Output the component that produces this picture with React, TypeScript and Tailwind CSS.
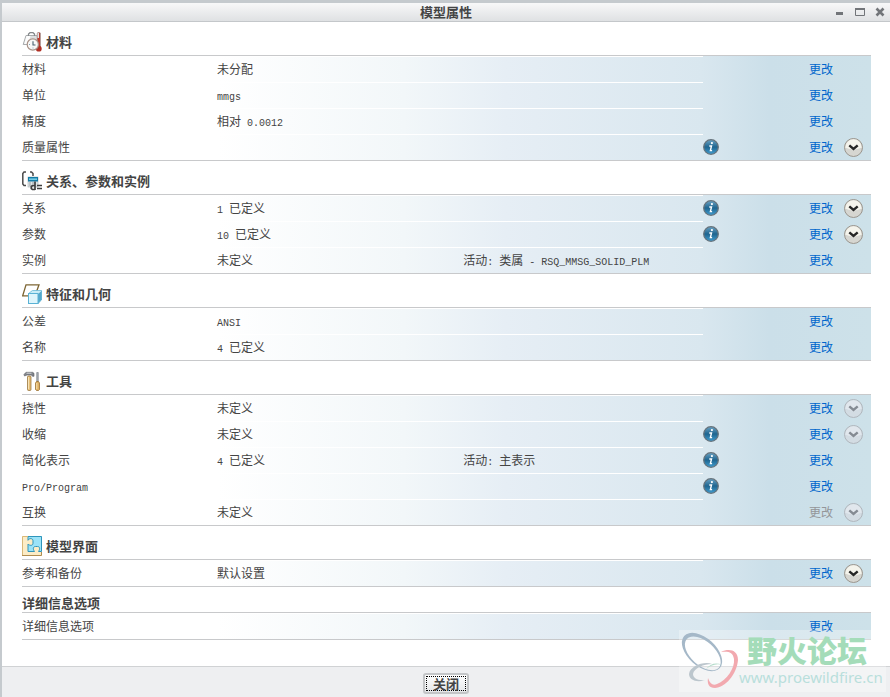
import type { ReactNode } from "react";
import { clsx } from "clsx";

type Chevron = "on" | "off";

interface Row {
  label: string;
  value?: string;
  extra?: string;
  info?: boolean;
  chevron?: Chevron;
  disabled?: boolean;
}

interface Section {
  title: string;
  icon?: ReactNode;
  rows: Row[];
}

function MaterialIcon() {
  return (
    <svg width="20" height="20" viewBox="0 0 20 20" aria-hidden="true">
      <path d="M4 3.500h11l2 9H1.200z" fill="#dcdfe0" stroke="#a9acae" />
      <path d="M4.500 4L2.200 12h4l2.300-8z" fill="#fcfcfc" />
      <path d="M6.500 4V2l1.500-1.300h3L12.500 2v2" fill="none" stroke="#85898b" strokeWidth="1.300" />
      <rect x="15.200" y=".6" width="3.200" height="15" rx="1" fill="#bd3a2c" stroke="#8f8f8f" strokeWidth=".6" />
      <rect x="15.500" y="1" width="1.500" height="5" fill="#dfe1e1" />
      <circle cx="16.800" cy="16.700" r="2.900" fill="#b02f24" />
      <circle cx="10.800" cy="12.500" r="5.600" fill="#f8f8f7" stroke="#a99389" strokeWidth="1.200" />
      <path d="M11 9.300v3.700h2.500" fill="none" stroke="#46606f" strokeWidth="1.100" />
      <path d="M7 12.500h1M10.500 16h1" stroke="#86a6bb" />
    </svg>
  );
}

function RelationIcon() {
  return (
    <svg width="20" height="20" viewBox="0 0 20 20" aria-hidden="true">
      <path d="M4 1H2L.8 2.500v10.500L2 14.500h2" fill="none" stroke="#4b4b4b" strokeWidth="1.500" />
      <path d="M8 1h1.500L11 2.500V5" fill="none" stroke="#4b4b4b" strokeWidth="1.500" />
      <rect x="6" y="6" width="10" height="10" fill="#dfe4e6" stroke="#a9afb2" strokeWidth=".6" />
      <rect x="6" y="6" width="10" height="4.500" fill="#137aa5" />
      <rect x="7" y="7.500" width="8" height="1.300" fill="#8be0f6" />
      <path d="M7 12h2M10 12h2M7 14h2" stroke="#9aa1a5" />
      <path d="M13 10.500v8.500M13 14.500h-2.500L9.300 15.500v2L10.500 18.500H13" fill="none" stroke="#3f3f3f" strokeWidth="1.700" />
      <path d="M15 14.500h5M15 17.500h5" stroke="#3f3f3f" strokeWidth="1.400" />
    </svg>
  );
}

function FeatureIcon() {
  return (
    <svg width="20" height="20" viewBox="0 0 20 20" aria-hidden="true">
      <path d="M4 .8h13l-4 11H.7z" fill="#fff" stroke="#7d6533" strokeWidth="1.300" />
      <path d="M6 10l4-3.500h10L16 10z" fill="#c8edf8" />
      <path d="M16 10l4-3.500v9L16 20z" fill="#55a9cc" />
      <rect x="6.500" y="9.500" width="9.500" height="10" fill="#def5fc" stroke="#5ab2d5" />
      <path d="M6.500 9.500l4-3h9v9l-3.500 4" fill="none" stroke="#6bbad8" strokeWidth=".8" />
    </svg>
  );
}

function ToolsIcon() {
  return (
    <svg width="20" height="20" viewBox="0 0 20 20" aria-hidden="true">
      <path d="M2 3.500L4 1.300h6.500l1.500 1v3h-1.500L9.500 4H5L2.500 5z" fill="#80848a" stroke="#5a5d63" strokeWidth=".6" />
      <path d="M4.500 2.200h5" stroke="#d5d8dc" />
      <rect x="5.500" y="5" width="3.500" height="14.500" rx="1" fill="#e6bf78" stroke="#8f6b31" strokeWidth=".7" />
      <path d="M6.500 6v12" stroke="#f8e3b5" />
      <path d="M14.700 1.500h1.600v9h-1.600z" fill="#aab0b7" stroke="#666b73" strokeWidth=".5" />
      <path d="M13.500 12l1-1.500h2l1 1.500v6.500l-1 1h-2l-1-1z" fill="#dfb164" stroke="#8f6427" strokeWidth=".7" />
      <path d="M14.800 12v6" stroke="#f8e3b5" />
    </svg>
  );
}

function InterfaceIcon() {
  return (
    <svg width="20" height="20" viewBox="0 0 20 20" aria-hidden="true">
      <rect width="20" height="20" fill="#9be3f8" />
      <path
        d="M0 0h6v4.300C7 2 11 2 11 4.800v2.400C11 10 7.500 9.800 6 8v7.500h6.500c-1.800-2.500-1.500-5 1-5h2c2.500 0 2.700 2.500 1 5H20V20H0z"
        fill="#fcecc6"
      />
      <path
        d="M6 0v4.300C7 2 11 2 11 4.800v2.400C11 10 7.500 9.800 6 8v7.500h6.500c-1.800-2.500-1.500-5 1-5h2c2.500 0 2.700 2.500 1 5h3V.5H6"
        fill="none"
        stroke="#2f95bb"
      />
      <path d="M.5 20V.5H6" fill="none" stroke="#d8b878" />
      <path d="M0 19.500h19.500V16" fill="none" stroke="#b08c50" />
    </svg>
  );
}

const sections: Section[] = [
  {
    title: "材料",
    icon: <MaterialIcon />,
    rows: [
      { label: "材料", value: "未分配" },
      { label: "单位", value: "mmgs" },
      { label: "精度", value: "相对 0.0012" },
      { label: "质量属性", info: true, chevron: "on" },
    ],
  },
  {
    title: "关系、参数和实例",
    icon: <RelationIcon />,
    rows: [
      { label: "关系", value: "1 已定义", info: true, chevron: "on" },
      { label: "参数", value: "10 已定义", info: true, chevron: "on" },
      { label: "实例", value: "未定义", extra: "活动: 类属 - RSQ_MMSG_SOLID_PLM" },
    ],
  },
  {
    title: "特征和几何",
    icon: <FeatureIcon />,
    rows: [
      { label: "公差", value: "ANSI" },
      { label: "名称", value: "4 已定义" },
    ],
  },
  {
    title: "工具",
    icon: <ToolsIcon />,
    rows: [
      { label: "挠性", value: "未定义", chevron: "off" },
      { label: "收缩", value: "未定义", info: true, chevron: "off" },
      { label: "简化表示", value: "4 已定义", extra: "活动: 主表示", info: true },
      { label: "Pro/Program", info: true },
      { label: "互换", value: "未定义", chevron: "off", disabled: true },
    ],
  },
  {
    title: "模型界面",
    icon: <InterfaceIcon />,
    rows: [{ label: "参考和备份", value: "默认设置", chevron: "on" }],
  },
  {
    title: "详细信息选项",
    rows: [{ label: "详细信息选项" }],
  },
];

// Latin runs are set in a half-width mono face, two letters per Chinese character
function Mixed({ text = "" }: { text?: string }) {
  return (
    <>
      {text.split(/([ -~]+)/).map((part, i) =>
        i % 2 ? (
          <span key={i} className="font-['Liberation_Mono',monospace] text-[10px] leading-none whitespace-pre">
            {part}
          </span>
        ) : (
          part
        )
      )}
    </>
  );
}

function InfoButton({ label }: { label: string }) {
  return (
    <button type="button" aria-label={`${label} info`} className="block size-4">
      <svg width="16" height="16" viewBox="0 0 16 16">
        <defs>
          <linearGradient id="info-fill" x1="0" y1="0" x2="0" y2="1">
            <stop offset="0" stopColor="#6ba3c4" />
            <stop offset=".5" stopColor="#1f658f" />
            <stop offset="1" stopColor="#409dd0" />
          </linearGradient>
        </defs>
        <circle cx="8" cy="8" r="7.300" fill="url(#info-fill)" stroke="#66737c" strokeWidth="1.300" />
        <circle cx="8.900" cy="4.100" r="1.100" fill="#fff" />
        <path d="M6.300 7h2.200l-1.100 4.600h1.700" fill="none" stroke="#fff" strokeWidth="1.400" />
      </svg>
    </button>
  );
}

function ChevronButton({ label, state }: { label: string; state: Chevron }) {
  const on = state === "on";
  return (
    <button type="button" aria-label={`${label} expand`} disabled={!on} className="block size-5">
      <svg width="20" height="20" viewBox="0 0 20 20">
        <circle cx="9.500" cy="10.500" r="9" fill={on ? "#d6d6d1" : "#d3dce3"} stroke={on ? "#9a958d" : "#b0b6bc"} />
        <path d="M1.300 10.500a8.200 8.200 0 0 1 16.400 0q-8.200 4-16.400 0z" fill={on ? "#f5f4ec" : "#e1e7ed"} />
        <path d="M5.300 8.300l4.200 3.700 4.200-3.700" fill="none" stroke={on ? "#262626" : "#858b93"} strokeWidth="2.400" />
      </svg>
    </button>
  );
}

function PropertySection({ title, icon, rows }: Section) {
  return (
    <section>
      <h2
        className={clsx(
          "flex items-center gap-1 text-[13px] font-bold",
          icon ? "pt-[10px] pb-[3px] leading-5" : "pt-[7px] leading-[18px]"
        )}
      >
        {icon}
        {title}
      </h2>
      <table className="w-full table-fixed border-separate border-spacing-0 border-y border-[#c8c9cb]">
        <colgroup>
          <col className="w-[195px]" />
          <col className="w-[29%]" />
          <col />
          <col className="w-[106px]" />
          <col className="w-[35px]" />
          <col className="w-[27px]" />
        </colgroup>
        <tbody>
          {rows.map((row) => (
            <tr
              key={row.label}
              className="h-[26px] bg-[linear-gradient(to_right,#fff_23%,#f2f7f9_45%,#e6eef5_57%,#d9e7ef_80%,#cbdfe9_88%,#cde1e9)]"
            >
              <th scope="row" className="p-0 text-left font-normal">
                <Mixed text={row.label} />
              </th>
              <td className="border-t border-white p-0 pb-px">
                <Mixed text={row.value} />
              </td>
              <td className="border-t border-white p-0 pb-px">
                <Mixed text={row.extra} />
              </td>
              <td className="p-0">{row.info && <InfoButton label={row.label} />}</td>
              <td className="p-0">
                {row.disabled ? (
                  <a aria-disabled="true" className="text-[#949699]">
                    更改
                  </a>
                ) : (
                  <a href="#" className="text-[#0066cc]">
                    更改
                  </a>
                )}
              </td>
              <td className="p-0">{row.chevron && <ChevronButton label={row.label} state={row.chevron} />}</td>
            </tr>
          ))}
        </tbody>
      </table>
    </section>
  );
}

function TitleBar() {
  return (
    <header className="grid h-[19px] grid-cols-[1fr_auto_1fr] items-center border-b border-[#c4c7ca] bg-linear-to-b from-[#f8f8f9] to-[#dfe1e3]">
      <h1 className="col-start-2 text-[13px] leading-[18px] font-bold">模型属性</h1>
      <div className="flex justify-end gap-2 pr-1 text-[#727579]">
        <button type="button" aria-label="Minimize">
          <svg width="12" height="12" viewBox="0 0 12 12">
            <path d="M2 7.500h7" stroke="currentColor" strokeWidth="3" />
          </svg>
        </button>
        <button type="button" aria-label="Maximize">
          <svg width="12" height="12" viewBox="0 0 12 12">
            <path d="M1.500 2.500h9v7h-9z" fill="none" stroke="currentColor" />
            <path d="M1 3h10" stroke="currentColor" strokeWidth="2" />
          </svg>
        </button>
        <button type="button" aria-label="Close">
          <svg width="12" height="12" viewBox="0 0 12 12">
            <path d="M2.500 2.500l7 7M9.500 2.500l-7 7" stroke="currentColor" strokeWidth="2.600" />
          </svg>
        </button>
      </div>
    </header>
  );
}

function ForumBadge() {
  return (
    <div className="pointer-events-none absolute right-1 bottom-[5px] flex h-[62px] w-[207px] items-start bg-white/30">
      <svg width="60" height="62" viewBox="0 0 60 62" aria-hidden="true" className="shrink-0">
        {/* each ring is the sliver between an outer and an inner tilted ellipse */}
        <g transform="rotate(42 23 22)" fill="#a5b8c8" fillRule="evenodd">
          <path d="M-1 22a24 14 0 1 0 48 0a24 14 0 1 0-48 0zM3 22.500a21.500 12 0 1 0 43 0a21.500 12 0 1 0-43 0z" />
        </g>
        <path d="M33 34C25 31 11 36 10 44C10 50 18 53 26 50C19 51 14 48 14 44C15 38 25 34 33 34z" fill="#bcc6cd" />
        <path d="M27 39C31 34 37 32 43 35C37 33 31 36 27 39z" fill="#b5dccb" />
        <path d="M42 22C50 18 59 20 59 30C58 44 46 58 36 58C30 58 28 54 29 48C31 54 34 56 38 54C48 50 56 38 55 29C54 22 49 21 42 22z" fill="#f2a9af" />
      </svg>
      <div className="whitespace-nowrap">
        <p className="pt-[3px] pl-2 text-[30px] leading-8 font-black text-[#a4dcb9]">野火论坛</p>
        <p className="font-['Noto_Sans',sans-serif] text-[15px] leading-6 text-[#b9dfdc]">www.proewildfire.cn</p>
      </div>
    </div>
  );
}

export default function App() {
  return (
    <div className="relative flex min-h-screen flex-col border-t-[3px] border-l-2 border-[#c5cace] bg-white font-['Noto_Sans_CJK_SC',sans-serif] text-xs text-[#444]">
      <TitleBar />
      <main className="flex-1 pr-[19px] pb-6 pl-5">
        {sections.map((section) => (
          <PropertySection key={section.title} {...section} />
        ))}
      </main>
      <footer className="flex justify-center border-t border-[#d0d2d4] bg-[#eeeff1] pt-[6px] pb-[3px]">
        <button
          type="button"
          className="rounded-[3px] border-2 border-[#c3c5c7] bg-linear-to-b from-white to-[#e4e6e8] p-px text-[13px] font-bold"
        >
          <span className="block border border-dotted border-black px-[6px] leading-[13px]">关闭</span>
        </button>
      </footer>
      <ForumBadge />
    </div>
  );
}
